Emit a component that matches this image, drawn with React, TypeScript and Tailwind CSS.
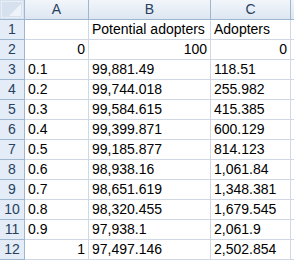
const rows: [string, string, string, string, string, string][] = [
  // [A, B, C, alignA, alignB, alignC]
  ["", "Potential adopters", "Adopters", "l", "l", "l"],
  ["0", "100", "0", "r", "r", "r"],
  ["0.1", "99,881.49", "118.51", "l", "l", "l"],
  ["0.2", "99,744.018", "255.982", "l", "l", "l"],
  ["0.3", "99,584.615", "415.385", "l", "l", "l"],
  ["0.4", "99,399.871", "600.129", "l", "l", "l"],
  ["0.5", "99,185.877", "814.123", "l", "l", "l"],
  ["0.6", "98,938.16", "1,061.84", "l", "l", "l"],
  ["0.7", "98,651.619", "1,348.381", "l", "l", "l"],
  ["0.8", "98,320.455", "1,679.545", "l", "l", "l"],
  ["0.9", "97,938.1", "2,061.9", "l", "l", "l"],
  ["1", "97,497.146", "2,502.854", "r", "l", "l"],
];

const font = { fontFamily: '"Liberation Sans", Arial, sans-serif' };

function Cell({ value, align }: { value: string; align: string }) {
  return (
    <div
      className={`h-5 border-b border-r border-[#d0d7e5] bg-white px-[3px] text-[14px] leading-[19px] whitespace-nowrap overflow-visible text-black ${
        align === "r" ? "text-right" : "text-left"
      }`}
    >
      {value}
    </div>
  );
}

export default function App() {
  return (
    <div className="h-[261px] w-[294px] overflow-hidden bg-white" style={font}>
      <div className="grid grid-cols-[25px_64px_122px_80px_1fr]">
        {/* header row */}
        <div className="relative h-5 border-b border-r border-[#9eb6ce] bg-[#d6e0ee]">
          <div className="absolute inset-[1px] border border-[#e9eff7]" />
          <div className="absolute bottom-[3px] right-[3px] h-0 w-0 border-b-[12px] border-l-[12px] border-b-[#eef3f9] border-l-transparent" />
        </div>
        {["A", "B", "C"].map((c) => (
          <div
            key={c}
            className="h-5 border-b border-r border-[#9eb6ce] bg-gradient-to-b from-[#f2f6fb] to-[#dde6f1] text-center text-[14px] leading-[19px] text-[#27415f]"
          >
            {c}
          </div>
        ))}
        <div className="h-5 border-b border-[#9eb6ce] bg-gradient-to-b from-[#f2f6fb] to-[#dde6f1]" />

        {rows.map((r, i) => (
          <div key={i} className="contents">
            <div className="h-5 border-b border-r border-[#9eb6ce] bg-[#e4ecf7] text-center text-[14px] leading-[19px] text-[#27415f]">
              {i + 1}
            </div>
            <Cell value={r[0]} align={r[3]} />
            <Cell value={r[1]} align={r[4]} />
            <Cell value={r[2]} align={r[5]} />
            <div className="h-5 border-b border-[#d0d7e5] bg-white" />
          </div>
        ))}
      </div>
    </div>
  );
}
